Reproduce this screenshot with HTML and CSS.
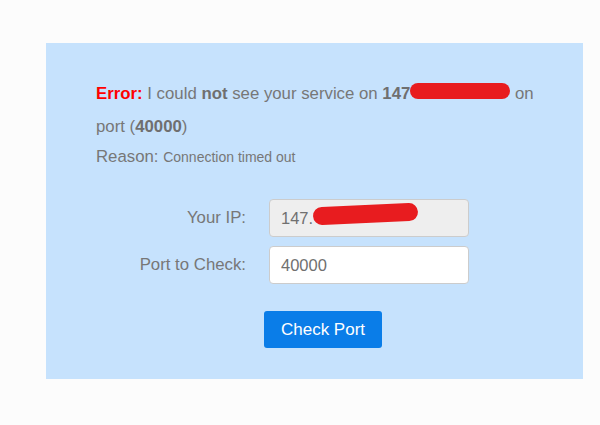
FILE: index.html
```html
<!DOCTYPE html>
<html lang="en">
<head>
<meta charset="utf-8">
<title>Port Check</title>
<link rel="stylesheet" href="styles.css">
</head>
<body>
<div class="panel">
  <p class="msg"><strong class="err">Error:</strong> I could <strong>not</strong> see your service on <strong>147<span class="redact"></span></strong> on port (<strong>40000</strong>)</p>
  <p class="reason">Reason: <small>Connection timed out</small></p>
  <form class="grid">
    <label for="ip">Your IP:</label>
    <div class="field">
      <input id="ip" class="input readonly" type="text" value="147." readonly>
      <span class="scribble"></span>
    </div>
    <label for="port">Port to Check:</label>
    <div class="field">
      <input id="port" class="input" type="text" value="40000">
    </div>
  </form>
  <div class="actions">
    <button type="button" class="btn">Check Port</button>
  </div>
</div>
</body>
</html>
```
FILE: styles.css
```css
html, body {
  margin: 0;
  background: #fcfcfc;
}
body {
  padding: 43px 17px 46px 46px;
  font-family: "Liberation Sans", Arial, sans-serif;
  color: #777777;
}
.panel {
  width: 537px;
  box-sizing: border-box;
  background: #c6e2fd;
  padding: 34px 30px 31px 50px;
}
.msg {
  margin: 0;
  font-size: 16.8px;
  line-height: 33px;
  width: 455px;
}
.msg strong {
  color: #6f6f6f;
}
.msg .err {
  color: #ff0000;
}
.redact {
  display: inline-block;
  width: 100px;
  height: 16px;
  background: #e81c1f;
  border-radius: 8px;
  vertical-align: baseline;
}
.reason {
  margin: 0;
  font-size: 16.8px;
  line-height: 28px;
}
.reason small {
  font-size: 14px;
}
.grid {
  margin: 28px 0 0;
  display: grid;
  grid-template-columns: 150px 200px;
  column-gap: 23px;
  row-gap: 9px;
  align-items: center;
}
.grid label {
  text-align: right;
  font-size: 16.8px;
}
.field {
  position: relative;
}
.input {
  display: block;
  width: 200px;
  height: 38px;
  box-sizing: border-box;
  padding: 0 11px;
  border: 1px solid #cccccc;
  border-radius: 4px;
  background: #ffffff;
  font-family: "Liberation Sans", Arial, sans-serif;
  font-size: 16.5px;
  color: #707070;
}
.input.readonly {
  background: #eeeeee;
}
.scribble {
  position: absolute;
  left: 44px;
  top: 6px;
  width: 105px;
  height: 18px;
  background: #e81c1f;
  border-radius: 9px;
  transform: rotate(-2.5deg);
}
.actions {
  margin-top: 27px;
  padding-left: 168px;
}
.btn {
  width: 118px;
  height: 37px;
  border: none;
  border-radius: 3px;
  background: #0a7de8;
  color: #ffffff;
  font-family: "Liberation Sans", Arial, sans-serif;
  font-size: 17px;
  padding: 0;
}
```
